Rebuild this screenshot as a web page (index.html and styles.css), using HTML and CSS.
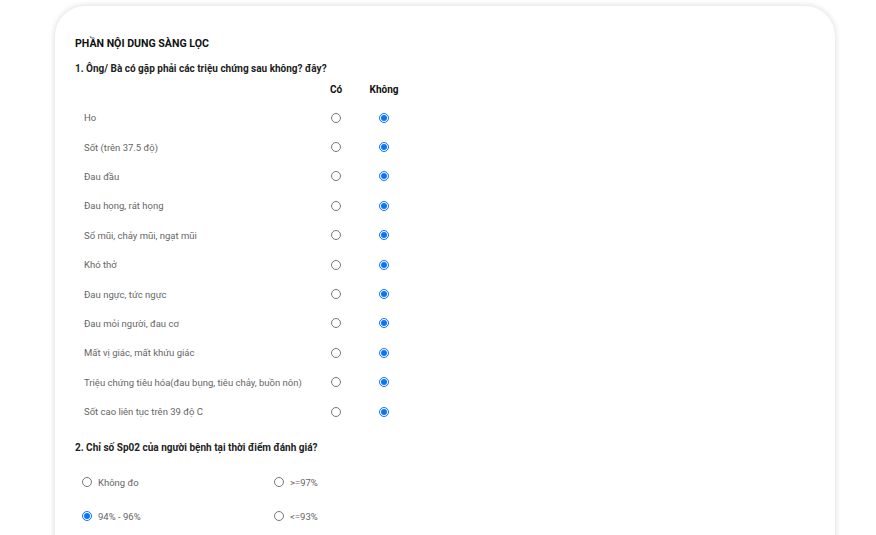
FILE: index.html
```html
<!DOCTYPE html>
<html lang="vi">
<head>
<meta charset="utf-8">
<link rel="stylesheet" href="styles.css">
</head>
<body>
<div class="card">
  <h2 class="title">PHẦN NỘI DUNG SÀNG LỌC</h2>
  <p class="question">1. Ông/ Bà có gặp phải các triệu chứng sau không? đây?</p>
  <div class="matrix">
    <div class="mhead"><span></span><span class="col">Có</span><span class="col">Không</span></div>
    <div class="mrow"><span class="label">Ho</span><span class="cell"><input type="radio" name="r1"></span><span class="cell"><input type="radio" name="r1" checked></span></div>
    <div class="mrow"><span class="label">Sốt (trên 37.5 độ)</span><span class="cell"><input type="radio" name="r2"></span><span class="cell"><input type="radio" name="r2" checked></span></div>
    <div class="mrow"><span class="label">Đau đầu</span><span class="cell"><input type="radio" name="r3"></span><span class="cell"><input type="radio" name="r3" checked></span></div>
    <div class="mrow"><span class="label">Đau họng, rát họng</span><span class="cell"><input type="radio" name="r4"></span><span class="cell"><input type="radio" name="r4" checked></span></div>
    <div class="mrow"><span class="label">Sổ mũi, chảy mũi, ngạt mũi</span><span class="cell"><input type="radio" name="r5"></span><span class="cell"><input type="radio" name="r5" checked></span></div>
    <div class="mrow"><span class="label">Khó thở</span><span class="cell"><input type="radio" name="r6"></span><span class="cell"><input type="radio" name="r6" checked></span></div>
    <div class="mrow"><span class="label">Đau ngực, tức ngực</span><span class="cell"><input type="radio" name="r7"></span><span class="cell"><input type="radio" name="r7" checked></span></div>
    <div class="mrow"><span class="label">Đau mỏi người, đau cơ</span><span class="cell"><input type="radio" name="r8"></span><span class="cell"><input type="radio" name="r8" checked></span></div>
    <div class="mrow"><span class="label">Mất vị giác, mất khứu giác</span><span class="cell"><input type="radio" name="r9"></span><span class="cell"><input type="radio" name="r9" checked></span></div>
    <div class="mrow"><span class="label">Triệu chứng tiêu hóa(đau bụng, tiêu chảy, buồn nôn)</span><span class="cell"><input type="radio" name="r10"></span><span class="cell"><input type="radio" name="r10" checked></span></div>
    <div class="mrow"><span class="label">Sốt cao liên tục trên 39 độ C</span><span class="cell"><input type="radio" name="r11"></span><span class="cell"><input type="radio" name="r11" checked></span></div>
  </div>
  <p class="question q2">2. Chỉ số Sp02 của người bệnh tại thời điểm đánh giá?</p>
  <div class="options">
    <label class="opt"><input type="radio" name="sp"><span>Không đo</span></label>
    <label class="opt"><input type="radio" name="sp"><span>&gt;=97%</span></label>
    <label class="opt"><input type="radio" name="sp" checked><span>94% - 96%</span></label>
    <label class="opt"><input type="radio" name="sp"><span>&lt;=93%</span></label>
  </div>
</div>
</body>
</html>
```

FILE: styles.css
```css
html, body {
  margin: 0;
  padding: 0;
  background: #ffffff;
}
body {
  font-family: Roboto, "Liberation Sans", Arial, sans-serif;
  color: #222;
}
.card {
  margin: 6px 0 0 55px;
  width: 780px;
  min-height: 560px;
  box-sizing: border-box;
  padding: 30px 20px 0 20px;
  background: #fff;
  border-radius: 30px 30px 0 0;
  box-shadow: 0 0 6px rgba(0, 0, 0, 0.16);
}
.title {
  margin: 0;
  font-size: 10.6px;
  line-height: 16px;
  font-weight: 700;
  color: #111;
}
.question {
  margin: 9px 0 0 0;
  font-size: 10px;
  line-height: 16px;
  font-weight: 700;
  color: #222;
}
.matrix {
  margin-top: 4px;
}
.mhead, .mrow {
  display: grid;
  grid-template-columns: 237px 48px 48px;
  align-items: center;
}
.mhead {
  height: 16px;
  font-size: 10px;
  font-weight: 700;
  color: #111;
  margin-bottom: 6px;
}
.col {
  text-align: center;
}
.mrow {
  height: 29.4px;
}
.label {
  padding-left: 9px;
  font-size: 9.5px;
  color: #666;
  white-space: nowrap;
}
.cell {
  display: flex;
  justify-content: center;
  align-items: center;
}
input[type="radio"] {
  width: 10px;
  height: 10px;
  margin: 0;
  accent-color: #0a74ff;
}
.q2 {
  margin-top: 14px;
}
.options {
  margin-top: 9px;
  padding-left: 7px;
  display: grid;
  grid-template-columns: 192px 192px;
  grid-auto-rows: 34px;
}
.opt {
  display: flex;
  align-items: center;
  gap: 6px;
  font-size: 9.5px;
  color: #666;
}
```
